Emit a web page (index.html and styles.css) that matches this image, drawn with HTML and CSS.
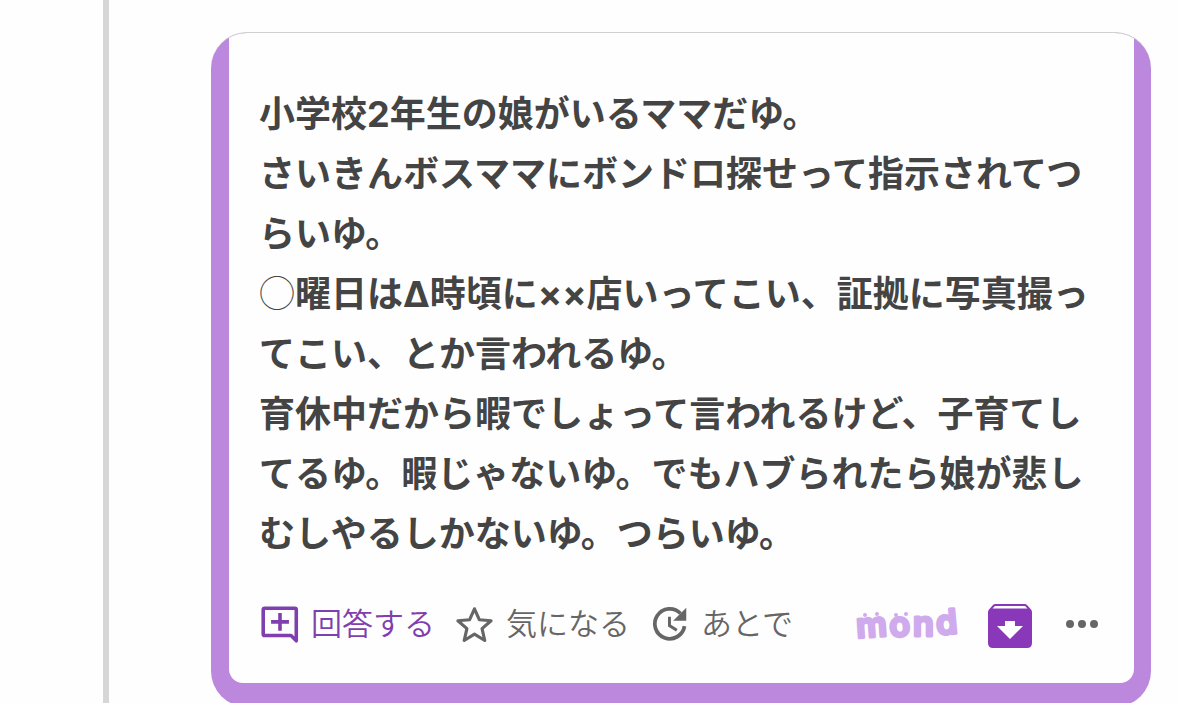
FILE: index.html
```html
<!DOCTYPE html>
<html lang="ja">
<head>
<meta charset="utf-8">
<meta name="viewport" content="width=device-width, initial-scale=1">
<title>mond</title>
<link rel="stylesheet" href="styles.css">
</head>
<body>
<main class="page">
  <article class="card">
    <div class="card-body">
      <div class="question">
        <p>小学校2年生の娘がいるママだゆ。</p>
        <p>さいきんボスママにボンドロ探せって指示されてつらいゆ。</p>
        <p><span class="circle">◯</span>曜日はΔ時頃に××店いってこい、証拠に写真撮ってこい、とか言われるゆ。</p>
        <p>育休中だから暇でしょって言われるけど、子育てしてるゆ。暇じゃないゆ。でもハブられたら娘が悲しむしやるしかないゆ。つらいゆ。</p>
      </div>
      <footer class="actions">
        <button class="action action-primary" type="button">
          <svg class="icon" viewBox="0 0 40 40" aria-hidden="true">
            <path d="M35.500 36V6.500Q35.500 5 34 5H5.500Q4 5 4 6.500V29.500Q4 31 5.500 31H30.500Z" fill="none" stroke="currentColor" stroke-width="3.400" stroke-linejoin="round"/>
            <path d="M20 9.500V26.500M11.500 18H28.500" fill="none" stroke="currentColor" stroke-width="3.400"/>
          </svg>
          <span>回答する</span>
        </button>
        <button class="action" type="button">
          <svg class="icon" viewBox="0 0 40 40" aria-hidden="true">
            <path d="M19.500 5.500L24.100 15.900L35.300 16.900L26.700 24.400L29.300 35.700L19.500 29.700L9.700 35.700L12.300 24.400L3.700 16.900L14.900 15.900Z" fill="none" stroke="currentColor" stroke-width="3" stroke-linejoin="round"/>
          </svg>
          <span>気になる</span>
        </button>
        <button class="action" type="button">
          <svg class="icon" viewBox="0 0 40 40" aria-hidden="true">
            <path d="M30 10A14.200 14.200 0 1 0 33.800 22" fill="none" stroke="currentColor" stroke-width="3.600"/>
            <path d="M35.500 4.500V17H23Z" fill="currentColor"/>
            <path d="M19.500 13V21.500L26.500 26" fill="none" stroke="currentColor" stroke-width="2.800"/>
          </svg>
          <span>あとで</span>
        </button>
        <div class="tools">
          <a class="logo-link" href="#">
            <svg class="logo" viewBox="0 0 106 44">
              <text class="wordmark" x="2 35 58 82" y="36 35 34 33" rotate="-4 -4 0 -5">mond</text>
              <g fill="#cfaaec">
                <circle cx="10" cy="13" r="2"/><circle cx="22" cy="12" r="2"/>
                <circle cx="41" cy="13" r="2"/><circle cx="51" cy="12" r="2"/>
              </g>
            </svg>
          </a>
          <button class="tool tool-save" type="button" aria-label="保存">
            <svg class="archive" viewBox="0 0 44 44" aria-hidden="true">
              <path d="M7 0H37Q38 0 39 1L43 5.500Q44 6.500 44 8V39Q44 44 39 44H5Q0 44 0 39V8Q0 6.500 1 5.500L5 1Q6 0 7 0Z" fill="#8a38ba"/>
              <path d="M7 2H37L39.500 4.500H4.500Z" fill="#fff"/>
              <path d="M17 17H27V22H35L22 35L9 22H17Z" fill="#fff"/>
            </svg>
          </button>
          <button class="tool tool-more" type="button" aria-label="メニュー">
            <svg class="more" viewBox="0 0 34 10" aria-hidden="true">
              <circle cx="5" cy="5" r="4" fill="#666"/><circle cx="17" cy="5" r="4" fill="#666"/><circle cx="29" cy="5" r="4" fill="#666"/>
            </svg>
          </button>
        </div>
      </footer>
    </div>
  </article>
</main>
</body>
</html>
```
FILE: styles.css
```css
* {
  box-sizing: border-box;
}

body {
  margin: 0;
  overflow: hidden;
  background: #fefefe;
  color: #444;
  font-family: Inter, "Noto Sans CJK JP", sans-serif;
}

.page {
  min-height: 100vh;
  margin-left: 103px;
  padding: 32px 28px 0 102px;
  border-left: 6px solid #d6d6d6;
}

.card {
  overflow: hidden;
  padding: 0 17px 24px 18px;
  border-top: 1px solid #d0d0d0;
  border-radius: 36px;
  background: #bb88de;
}

.card-body {
  padding: 51px 30px 35px;
  border-radius: 0 0 14px 14px;
  background: #fefefe;
}

.question {
  font-size: 36px;
  font-weight: 700;
  line-height: 60px;
}

.question p {
  margin: 0;
}

.circle {
  font-family: "Noto Sans CJK JP", sans-serif;
  font-weight: 300;
  line-height: 1;
}

.actions {
  display: flex;
  align-items: center;
  margin-top: 35px;
  gap: 19px;
}

button {
  padding: 0;
  border: 0;
  background: none;
  color: inherit;
  font: inherit;
}

.action {
  display: flex;
  align-items: center;
  gap: 10px;
  color: #666;
  font-size: 31px;
  font-weight: 350;
  line-height: 44px;
  white-space: nowrap;
}

.action-primary {
  color: #7f3fae;
}

.icon {
  width: 42px;
  height: 42px;
}

.tools {
  display: flex;
  align-items: center;
  gap: 27px;
  margin-left: auto;
  padding-right: 5px;
}

.tool {
  display: flex;
}

.tool-save {
  padding-top: 5px;
}

.tool-more {
  padding-left: 6px;
}

.logo-link {
  display: flex;
}

.logo {
  width: 106px;
  height: 44px;
}

.wordmark {
  fill: #cfaaec;
  stroke: #cfaaec;
  stroke-width: 3px;
  stroke-linejoin: round;
  font-family: Inter, sans-serif;
  font-size: 34px;
  font-weight: 600;
}

.archive {
  width: 44px;
  height: 44px;
}

.more {
  width: 34px;
  height: 10px;
}
```
